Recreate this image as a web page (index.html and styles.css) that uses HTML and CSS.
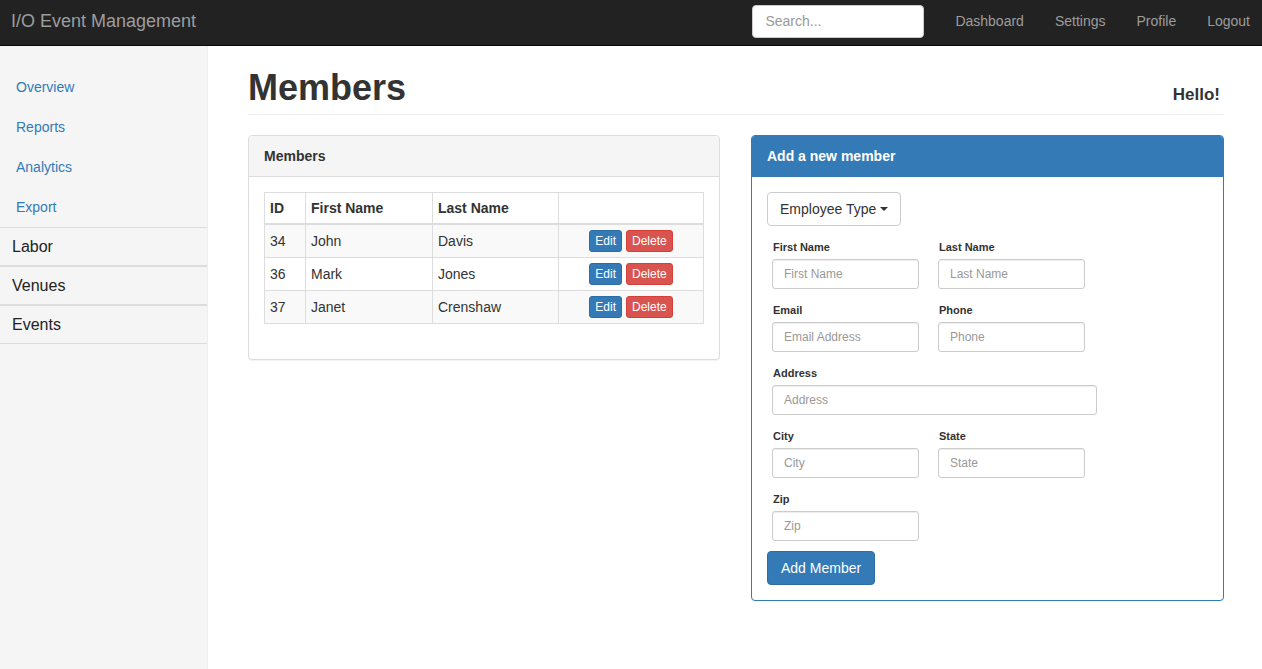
FILE: index.html
```html
<!DOCTYPE html>
<html>
<head>
<meta charset="utf-8">
<title>I/O Event Management</title>
<link rel="stylesheet" href="styles.css">
</head>
<body>
<nav class="navbar">
  <a class="brand" href="#">I/O Event Management</a>
  <div class="nav-right">
    <input class="search" type="text" placeholder="Search...">
    <a class="nav-link" href="#">Dashboard</a>
    <a class="nav-link" href="#">Settings</a>
    <a class="nav-link" href="#">Profile</a>
    <a class="nav-link" href="#">Logout</a>
  </div>
</nav>
<div class="layout">
  <aside class="sidebar">
    <ul class="side-links">
      <li><a href="#">Overview</a></li>
      <li><a href="#">Reports</a></li>
      <li><a href="#">Analytics</a></li>
      <li><a href="#">Export</a></li>
    </ul>
    <div class="side-group">Labor</div>
    <div class="side-group">Venues</div>
    <div class="side-group">Events</div>
  </aside>
  <main class="main">
    <div class="page-header">
      <h1>Members</h1>
      <h4 class="hello">Hello!</h4>
    </div>
    <div class="columns">
      <section class="panel">
        <div class="panel-heading">Members</div>
        <div class="panel-body">
          <table class="table">
            <thead>
              <tr><th class="c-id">ID</th><th class="c-first">First Name</th><th class="c-last">Last Name</th><th class="c-act"></th></tr>
            </thead>
            <tbody>
              <tr><td>34</td><td>John</td><td>Davis</td><td><div class="actions"><button class="btn-xs edit">Edit</button><button class="btn-xs del">Delete</button></div></td></tr>
              <tr><td>36</td><td>Mark</td><td>Jones</td><td><div class="actions"><button class="btn-xs edit">Edit</button><button class="btn-xs del">Delete</button></div></td></tr>
              <tr><td>37</td><td>Janet</td><td>Crenshaw</td><td><div class="actions"><button class="btn-xs edit">Edit</button><button class="btn-xs del">Delete</button></div></td></tr>
            </tbody>
          </table>
        </div>
      </section>
      <section class="panel panel-primary">
        <div class="panel-heading">Add a new member</div>
        <div class="panel-body">
          <button class="dropdown">Employee Type <span class="caret"></span></button>
          <div class="form">
            <div class="row">
              <div class="field"><label>First Name</label><input type="text" placeholder="First Name"></div>
              <div class="field"><label>Last Name</label><input type="text" placeholder="Last Name"></div>
            </div>
            <div class="row">
              <div class="field"><label>Email</label><input type="text" placeholder="Email Address"></div>
              <div class="field"><label>Phone</label><input type="text" placeholder="Phone"></div>
            </div>
            <div class="row">
              <div class="field wide"><label>Address</label><input type="text" placeholder="Address"></div>
            </div>
            <div class="row">
              <div class="field"><label>City</label><input type="text" placeholder="City"></div>
              <div class="field"><label>State</label><input type="text" placeholder="State"></div>
            </div>
            <div class="row last">
              <div class="field"><label>Zip</label><input type="text" placeholder="Zip"></div>
            </div>
          </div>
          <button class="btn-primary">Add Member</button>
        </div>
      </section>
    </div>
  </main>
</div>
</body>
</html>
```

FILE: styles.css
```css
* { box-sizing: border-box; }
html, body { margin: 0; height: 100%; }
body {
  font-family: "Liberation Sans", Arial, sans-serif;
  font-size: 14px;
  line-height: 20px;
  color: #333;
  background: #fff;
}
a { text-decoration: none; }

.navbar {
  height: 46px;
  background: #222;
  border-bottom: 1px solid #080808;
  display: flex;
  align-items: center;
  justify-content: space-between;
  padding: 0 12px 0 11px;
}
.brand {
  color: #9d9d9d;
  font-size: 18px;
  line-height: 20px;
  margin-top: -4px;
}
.nav-right {
  display: flex;
  align-items: center;
  gap: 31px;
}
.search {
  width: 172px;
  height: 33px;
  border: 1px solid #ccc;
  border-radius: 4px;
  padding: 0 12px;
  font-family: inherit;
  font-size: 14px;
  color: #555;
  margin-top: -3px;
}
.search::placeholder { color: #999; }
.nav-link {
  color: #9d9d9d;
  font-size: 14px;
  margin-top: -4px;
}

.layout {
  display: flex;
  height: calc(100% - 46px);
}
.sidebar {
  width: 208px;
  flex: none;
  background: #f5f5f5;
  border-right: 1px solid #eee;
  padding-top: 21px;
}
.side-links {
  list-style: none;
  margin: 0;
  padding: 0;
}
.side-links a {
  display: block;
  padding: 10px 16px;
  color: #337ab7;
}
.side-group {
  height: 39px;
  border-top: 1px solid #ddd;
  border-bottom: 1px solid #ddd;
  padding-left: 12px;
  font-size: 16px;
  line-height: 37px;
  color: #222;
}

.main {
  flex: 1;
  padding: 22px 38px 0 40px;
}
.page-header {
  display: flex;
  justify-content: space-between;
  align-items: baseline;
  border-bottom: 1px solid #eee;
  padding-bottom: 6px;
  margin-bottom: 20px;
}
.page-header h1 {
  margin: 0;
  font-size: 36px;
  line-height: 40px;
  font-weight: bold;
  color: #333;
}
.hello {
  margin: 0;
  padding-right: 4px;
  font-size: 17px;
  font-weight: bold;
  color: #333;
}

.columns {
  display: grid;
  grid-template-columns: 472px 473px;
  column-gap: 31px;
  align-items: start;
}
.panel {
  border: 1px solid #ddd;
  border-radius: 4px;
  background: #fff;
  box-shadow: 0 1px 1px rgba(0,0,0,.05);
}
.panel-heading {
  background: #f5f5f5;
  border-bottom: 1px solid #ddd;
  border-radius: 3px 3px 0 0;
  padding: 10px 15px;
  line-height: 20px;
  font-weight: bold;
  font-size: 14px;
  color: #333;
}
.panel-body { padding: 15px; }
.panel-primary { border-color: #337ab7; }
.panel-primary .panel-heading {
  background: #337ab7;
  border-color: #337ab7;
  color: #fff;
}

.table {
  width: 100%;
  border-collapse: collapse;
  margin-bottom: 20px;
  border: 1px solid #ddd;
}
.table th, .table td {
  border: 1px solid #ddd;
  padding: 5px;
  text-align: left;
  vertical-align: middle;
}
.table thead th { border-bottom-width: 2px; }
.table tbody tr:nth-child(odd) { background: #f9f9f9; }
.c-id { width: 41px; }
.c-first { width: 127px; }
.c-last { width: 126px; }
.actions {
  display: flex;
  justify-content: center;
  gap: 4px;
}
.btn-xs {
  height: 22px;
  padding: 1px 5px;
  font-family: inherit;
  font-size: 12px;
  line-height: 18px;
  color: #fff;
  border: 1px solid transparent;
  border-radius: 3px;
}
.edit { background: #337ab7; border-color: #2e6da4; }
.del { background: #d9534f; border-color: #d43f3a; }

.dropdown {
  height: 34px;
  padding: 6px 12px;
  font-family: inherit;
  font-size: 14px;
  line-height: 20px;
  color: #333;
  background: #fff;
  border: 1px solid #ccc;
  border-radius: 4px;
  margin-bottom: 13px;
  display: flex;
  align-items: center;
}
.caret {
  display: inline-block;
  width: 0;
  height: 0;
  margin-left: 4px;
  border-top: 4px solid #333;
  border-left: 4px solid transparent;
  border-right: 4px solid transparent;
}
.form { padding-left: 5px; }
.row {
  display: flex;
  gap: 19px;
  margin-bottom: 13px;
}
.row.last { margin-bottom: 10px; }
.field { width: 147px; }
.field.wide { width: 325px; }
.field label {
  display: block;
  font-size: 11px;
  line-height: 16px;
  font-weight: bold;
  margin-bottom: 4px;
  padding-left: 1px;
}
.field input {
  width: 100%;
  height: 30px;
  border: 1px solid #ccc;
  border-radius: 3px;
  padding: 0 11px;
  font-family: inherit;
  font-size: 12px;
  color: #555;
  box-shadow: inset 0 1px 1px rgba(0,0,0,.075);
}
.field input::placeholder { color: #999; }
.btn-primary {
  height: 34px;
  padding: 6px 13px;
  font-family: inherit;
  font-size: 14px;
  line-height: 20px;
  color: #fff;
  background: #337ab7;
  border: 1px solid #2e6da4;
  border-radius: 4px;
}
```
